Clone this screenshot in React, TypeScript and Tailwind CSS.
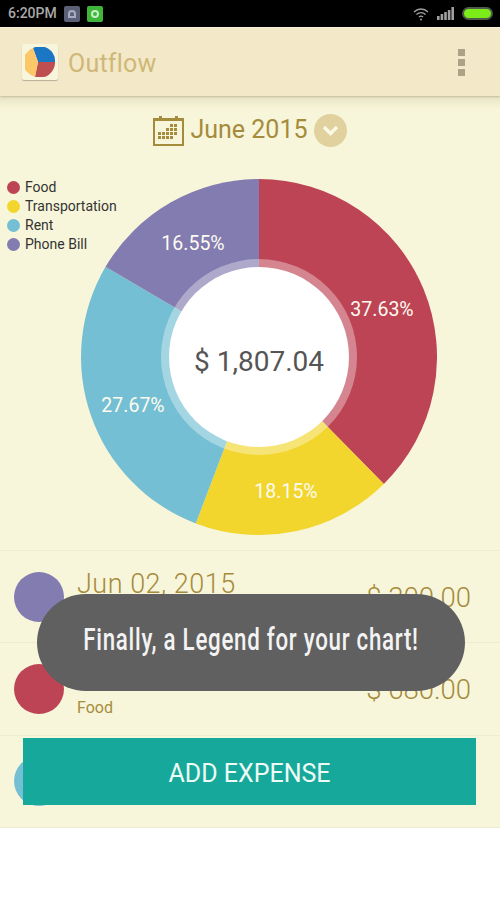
const slices = [
  { name: "Food", pct: 37.63, color: "#bd4455" },
  { name: "Transportation", pct: 18.15, color: "#f2d62e" },
  { name: "Rent", pct: 27.67, color: "#74bfd3" },
  { name: "Phone Bill", pct: 16.55, color: "#837cb0" },
];

const labels = [
  { text: "37.63%", x: 301, y: 137 },
  { text: "18.15%", x: 205, y: 319 },
  { text: "27.67%", x: 52, y: 233 },
  { text: "16.55%", x: 112, y: 71 },
];

const calendarDots = [
  [17, 9], [21, 9],
  [13, 13], [17, 13], [21, 13],
  [5, 17], [9, 17], [13, 17], [17, 17], [21, 17],
  [5, 21], [9, 21], [13, 21], [17, 21],
];

function slicePath(from: number, to: number) {
  const r = 178;
  const c = 178;
  const a0 = (from / 100) * Math.PI * 2;
  const a1 = (to / 100) * Math.PI * 2;
  const x0 = c + r * Math.sin(a0);
  const y0 = c - r * Math.cos(a0);
  const x1 = c + r * Math.sin(a1);
  const y1 = c - r * Math.cos(a1);
  const large = to - from > 50 ? 1 : 0;
  return `M${c} ${c} L${x0} ${y0} A${r} ${r} 0 ${large} 1 ${x1} ${y1} Z`;
}

function Donut() {
  let start = 0;
  return (
    <svg width="356" height="356" viewBox="0 0 356 356" className="block">
      {slices.map((s) => {
        const d = slicePath(start, start + s.pct);
        start += s.pct;
        return <path key={s.name} d={d} fill={s.color} />;
      })}
      <circle cx="178" cy="178" r="98" fill="#ffffff" fillOpacity="0.35" />
      <circle cx="178" cy="178" r="90" fill="#ffffff" />
      {labels.map((l) => (
        <text key={l.text} x={l.x} y={l.y} fontSize="19.5" fill="#fdfbf0" textAnchor="middle" fontFamily="Roboto, sans-serif">
          {l.text}
        </text>
      ))}
      <text x="178" y="192" fontSize="28" fill="#555555" textAnchor="middle" fontFamily="Roboto, sans-serif">
        $ 1,807.04
      </text>
    </svg>
  );
}

function CalendarIcon() {
  return (
    <svg width="31" height="31" viewBox="0 0 31 31" fill="#a58b3c">
      <path d="M1 4h29v26H1z" fill="none" stroke="#a58b3c" strokeWidth="2" />
      <rect x="1" y="4" width="29" height="2" />
      <rect x="6" y="1" width="3" height="5" />
      <rect x="22" y="1" width="3" height="5" />
      {calendarDots.map(([x, y]) => (
        <rect key={`${x}-${y}`} x={x} y={y} width="3" height="3" />
      ))}
    </svg>
  );
}

function AppIcon() {
  return (
    <div className="flex h-9 w-9 items-center justify-center rounded-[2px] bg-[#f8f5dd] shadow-[0_1px_1px_rgba(0,0,0,0.25)]">
      <svg width="30" height="30" viewBox="0 0 30 30">
        <path d="M13 15 L8 1 A15 15 0 0 1 30 15 Z" fill="#1b77c4" />
        <path d="M13 15 L30 15 A15 15 0 0 1 10 29.7 Z" fill="#bd4f50" />
        <path d="M13 15 L10 29.7 A15 15 0 0 1 8 1 Z" fill="#fbc768" />
      </svg>
    </div>
  );
}

function Row({ color, date, category, amount }: { color: string; date?: string; category?: string; amount?: string }) {
  return (
    <div className="flex h-[92.4px] items-center border-t border-[#eeecd0] pl-[14px] pr-[29px]">
      <div className="h-[50px] w-[50px] rounded-full" style={{ backgroundColor: color }} />
      <div className="ml-[13px] flex-1 text-[#a58b3c]">
        <div className="h-[32px] text-[27px] font-light leading-[32px] tracking-[0.5px]">{date}</div>
        <div className="mt-[6px] h-[20px] text-[16px] leading-[20px]">{category}</div>
      </div>
      <div className="mt-[2px] text-[27.5px] font-light text-[#a58b3c]">{amount}</div>
    </div>
  );
}

export default function App() {
  return (
    <div className="relative h-[900px] w-[500px] overflow-hidden bg-white font-['Roboto',sans-serif]">
      <div className="flex h-[27px] items-center bg-black pl-[8px] pr-[7px]">
        <span className="text-[14px] font-medium text-[#a8a8a8]">6:20PM</span>
        <div className="ml-[7px] flex h-4 w-4 items-center justify-center rounded-[2px] bg-[#5b6078]">
          <div className="h-2 w-2 rounded-t-full border-2 border-[#a8acc0]" />
        </div>
        <div className="ml-[7px] flex h-4 w-4 items-center justify-center rounded-[2px] bg-[#3fb63a]">
          <div className="h-2 w-2 rounded-full border-2 border-[#c8eec5]" />
        </div>
        <div className="ml-auto flex items-center">
          <svg width="16" height="14" viewBox="0 0 16 14" fill="none" stroke="#a0a0a0" strokeWidth="1.3">
            <path d="M1 5 C5 1 11 1 15 5" />
            <path d="M3.5 7.5 C6 5 10 5 12.5 7.5" />
            <path d="M6 10 C7 9 9 9 10 10" />
            <circle cx="8" cy="12.5" r="1" fill="#a0a0a0" stroke="none" />
          </svg>
          <svg width="18" height="13" viewBox="0 0 18 13" fill="#a0a0a0" className="ml-[8px]">
            <rect x="0" y="9" width="2.6" height="4" />
            <rect x="3.6" y="7" width="2.6" height="6" />
            <rect x="7.2" y="5" width="2.6" height="8" />
            <rect x="10.8" y="3" width="2.6" height="10" />
            <rect x="14.4" y="0" width="2.6" height="13" />
          </svg>
          <div className="ml-[7px] h-[13px] w-[31px] rounded-full border-2 border-[#4d5a4a] bg-[#7cec18]" />
        </div>
      </div>

      <header className="relative z-10 flex h-[69px] items-center border-t border-[#f7f0d8] bg-[#f3e8c8] pl-[22px] pr-[35px] shadow-[0_1px_2px_rgba(120,110,70,0.35)]">
        <AppIcon />
        <span className="ml-[10px] mt-[3px] text-[25px] tracking-[0.2px] text-[#cfb877]">Outflow</span>
        <div className="ml-auto flex flex-col gap-[3px]">
          <div className="h-[7px] w-[7px] bg-[#aca286]" />
          <div className="h-[7px] w-[7px] bg-[#aca286]" />
          <div className="h-[7px] w-[7px] bg-[#aca286]" />
        </div>
      </header>

      <main className="bg-[#f8f6da]">
        <section className="relative h-[454px] bg-gradient-to-b from-[#e8e5c6] from-0% to-[#f8f6da] to-[3%]">
          <div className="flex items-center justify-center pt-[17px]">
            <CalendarIcon />
            <span className="ml-[6px] text-[25px] leading-[34px] text-[#a58b3c]">June 2015</span>
            <div className="ml-[6px] flex h-[33px] w-[33px] items-center justify-center rounded-full bg-[#e0d19f]">
              <svg width="17" height="11" viewBox="0 0 17 11" fill="none" stroke="#fbf8e4" strokeWidth="3.4">
                <path d="M2 2 L8.5 8.5 L15 2" />
              </svg>
            </div>
          </div>
          <div className="ml-[81px] mt-[32px] w-[356px]">
            <Donut />
          </div>
          <ul className="absolute left-[7px] top-[82px] flex flex-col text-[14px] text-[#333333]">
            {slices.map((s) => (
              <li key={s.name} className="flex h-[19px] items-center gap-[5px]">
                <span className="h-[13px] w-[13px] rounded-full" style={{ backgroundColor: s.color }} />
                <span>{s.name}</span>
              </li>
            ))}
          </ul>
        </section>

        <Row color="#837cb0" date="Jun 02, 2015" amount="$ 300.00" />
        <Row color="#bd4455" category="Food" amount="$ 680.00" />
        <Row color="#74bfd3" />
        <div className="border-t border-[#eeecd0]" />
      </main>

      <button className="absolute left-[23px] top-[738px] h-[67px] w-[453px] bg-[#16a99b] pt-[5px] text-[25px] text-[#eefaf5]">
        ADD EXPENSE
      </button>

      <div className="absolute left-[37px] top-[594px] flex h-[97px] w-[428px] items-center justify-center rounded-full bg-[#606060] pb-[4px]">
        <span className="inline-block scale-x-[0.72] whitespace-nowrap text-[31px] font-medium tracking-[1px] text-[#f3f3f3]">
          Finally, a Legend for your chart!
        </span>
      </div>
    </div>
  );
}
